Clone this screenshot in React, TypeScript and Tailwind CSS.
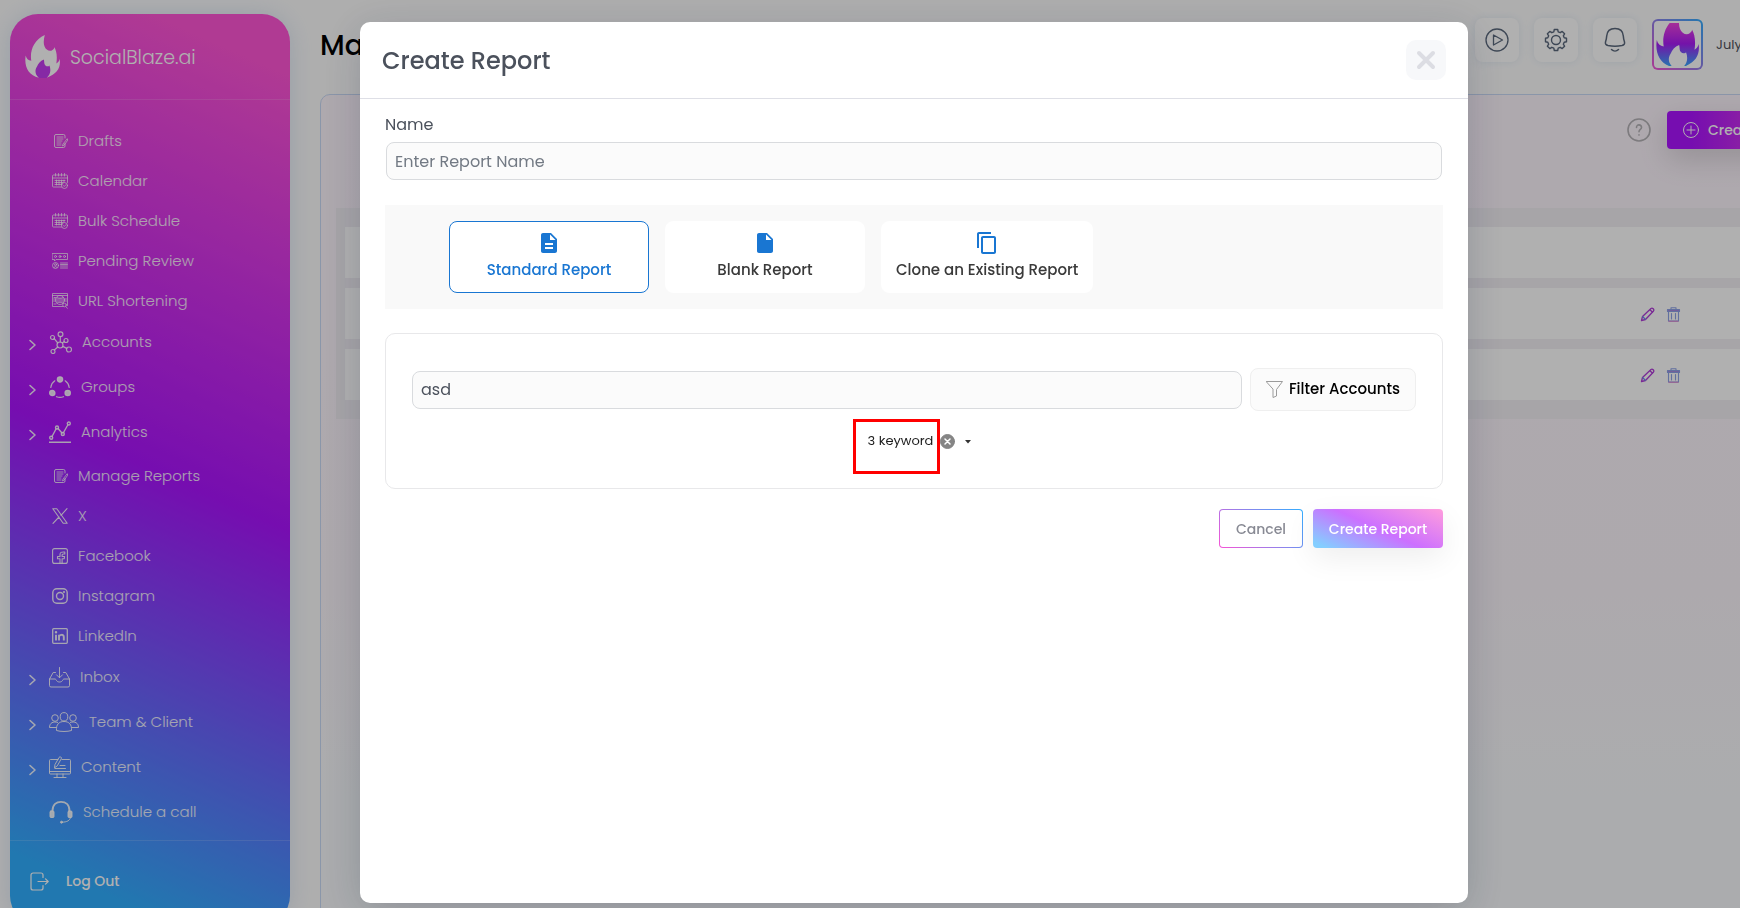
import type { ReactNode } from 'react'
import { MdContentCopy, MdDescription, MdInsertDriveFile } from 'react-icons/md'

const FLAME =
  'M60 0C57 12 55 24 59 34C63 46 76 51 83 45C88 42 90 38 88 35C96 48 98 66 95 86C101 83 104 78 105 72C109 98 98 118 66 129C78 120 79 104 74 92C72 95 66 96 62 92C57 88 59 80 57 74C46 78 40 86 36 96C29 106 30 120 42 129C10 122 -3 96 2 62C4 71 10 77 19 78C14 48 26 16 60 0Z'
const FLAME_CORE = 'M66 129C78 120 79 104 74 92C72 95 66 96 62 92C57 88 59 80 57 74C46 78 40 86 36 96C29 106 30 120 42 129C50 131 58 131 66 129Z'

const Svg = ({ size = 16, width = 1, box = 24, children }: { size?: number; width?: number; box?: number; children: ReactNode }) => (
  <svg
    width={size}
    height={size}
    viewBox={`0 0 ${box} ${box}`}
    fill="none"
    stroke="currentColor"
    strokeWidth={width}
    strokeLinecap="round"
    strokeLinejoin="round"
    aria-hidden="true"
    className="shrink-0"
  >
    {children}
  </svg>
)

const DraftIcon = () => (
  <Svg box={16} width={0.9}>
    <path d="M13 10.500V13a1.500 1.500 0 0 1-1.500 1.500H4A1.500 1.500 0 0 1 2.500 13V3A1.500 1.500 0 0 1 4 1.500h7.500A1.500 1.500 0 0 1 13 3v2" />
    <path d="M5 4h6M5 6h6M5 8h5M5 10h4M5 12h4" strokeWidth="0.8" />
    <path d="M15 6 11 11l-.5 2 1.700-1L15.500 7.500z" strokeWidth="0.8" />
  </Svg>
)

const CalendarIcon = () => (
  <Svg box={16} width={0.8}>
    <path d="M9.500 14H1.500a1 1 0 0 1-1-1V3a1 1 0 0 1 1-1h13a1 1 0 0 1 1 1v6.500M.5 5h15" />
    <path d="M3.500.5v2.500M6.500.5v2.500M9.500.5v2.500M12.500.5v2.500" />
    <path d="M3 7.500h10M3 9.500h8M3 11.500h7M4.500 7v5M7 7v5M9.500 7v5M12 7v2" />
    <circle cx="12.500" cy="12.500" r="3" />
    <path d="m11.300 12.500 1 1 1.600-1.800" />
  </Svg>
)

const ReviewIcon = () => (
  <Svg box={16} width={0.8}>
    <path d="M.5.500h15v6H4L2.500 8V6.500h-2z" />
    <circle cx="3.500" cy="3.500" r="1" />
    <circle cx="8" cy="3.500" r="1" />
    <circle cx="12.500" cy="3.500" r="1" />
    <circle cx="3.500" cy="12.500" r="3" />
    <circle cx="3.500" cy="11.700" r="1" />
    <path d="M2 14.500c.5-1.300 2.500-1.300 3 0M8.500 10h7M8.500 11.500h7M8.500 13h7M8.500 15h7" />
  </Svg>
)

const UrlIcon = () => (
  <Svg box={16} width={0.8}>
    <path d="M11 13.500H.5V.5h15v12M.5 2.500h15" />
    <circle cx="8" cy="7" r="4.500" />
    <path d="M1.500 6h13M1.500 8h13M5 4.500c2 1 4 1 6 0M5 10c2-1 4-1 6 0M2 11h2M2 4.500h1.500" />
    <circle cx="12.500" cy="12" r="1.800" />
    <path d="m13.800 13.500 1.500 1.800" />
  </Svg>
)

const XIcon = () => (
  <Svg box={16} width={1.1}>
    <path d="M.8.700h4L15.200 15.300h-4zM15 .7 9 7.300M7 9 1 15.300" />
  </Svg>
)

const FacebookIcon = () => (
  <Svg box={16} width={1.1}>
    <rect x=".6" y=".6" width="14.800" height="14.800" rx="2" />
    <path d="M8 15.300v-4.500H5.500V8.500H8V6.500C8 4.500 9.300 3.700 12.800 4v2h-1.500c-1 0-1.200.3-1.200 1v1.500h2.500l-.4 2.300h-2.100v4.500" />
  </Svg>
)

const InstagramIcon = () => (
  <Svg box={16} width={1.400}>
    <rect x=".8" y=".8" width="14.400" height="14.400" rx="4" />
    <circle cx="8" cy="8" r="3.500" />
    <circle cx="12" cy="4" r=".4" fill="currentColor" />
  </Svg>
)

const LinkedinIcon = () => (
  <Svg box={16} width={1.300}>
    <rect x=".7" y=".7" width="14.600" height="14.600" rx="1" />
    <path d="M4 6.700v5.800M7 6.700v5.800M7 9c.3-2.800 4.800-3 4.800 0v3.500" strokeWidth="1.900" strokeLinecap="butt" />
    <circle cx="4" cy="4.200" r=".6" fill="currentColor" />
  </Svg>
)

const AccountsIcon = () => (
  <Svg size={23} box={23} width={1.200}>
    <circle cx="11" cy="14" r="3" />
    <circle cx="11.500" cy="3.200" r="2.400" />
    <circle cx="3.500" cy="6.500" r="2" />
    <circle cx="17" cy="9.500" r="2" />
    <circle cx="20" cy="18.500" r="2.500" />
    <circle cx="4" cy="20.500" r="2" />
    <path d="M11.300 5.600V11M5.200 7.700l3.600 4.300M15.300 10.600l-2 1.400M13.800 15.400l3.900 2M8.800 16l-3.500 3" />
  </Svg>
)

const GroupsIcon = () => (
  <Svg size={22} box={22} width={1.200}>
    <circle cx="11" cy="3.500" r="2.700" fill="currentColor" />
    <circle cx="3.300" cy="17" r="2.700" fill="currentColor" />
    <circle cx="18.700" cy="17" r="2.700" fill="currentColor" />
    <path d="M5.800 4.800A9.500 9.500 0 0 0 1.800 11.500M16.200 4.800a9.500 9.500 0 0 1 4 6.700M7.500 20.700c2.300.9 4.700.9 7 0" />
  </Svg>
)

const AnalyticsIcon = () => (
  <Svg size={22} box={22} width={1.400}>
    <path d="M0 21.300h22M3 15.500l4-7.500M9 7.500l4 4.500M14.500 11.500l4-7" />
    <circle cx="2.200" cy="16.800" r="1.500" />
    <circle cx="8" cy="6.500" r="1.500" />
    <circle cx="13.800" cy="13" r="1.500" />
    <circle cx="19.800" cy="2.500" r="1.500" />
  </Svg>
)

const InboxIcon = () => (
  <Svg size={21} box={21} width={1}>
    <path d="M10.500.500v10M7.500 7.800l3 3 3-3M6.500 5.500H4.200L.5 12v6.500a1.500 1.500 0 0 0 1.500 1.500h17a1.500 1.500 0 0 0 1.500-1.500V12l-3.700-6.500h-2.300M.5 12h5.500c1.500 0 1 3 4.500 3s3-3 4.500-3h5.500" />
  </Svg>
)

const TeamIcon = () => (
  <svg width="30" height="20" viewBox="0 0 30 20" fill="none" stroke="currentColor" strokeWidth="1" aria-hidden="true" className="shrink-0">
    <ellipse cx="15" cy="4.800" rx="3.800" ry="4.200" />
    <circle cx="6" cy="6" r="3.300" />
    <circle cx="24" cy="6" r="3.300" />
    <path d="M7.500 18.500C7 12.500 10 9.500 15 9.500s8 3 7.500 9c-4 1.300-11 1.300-15 0zM9 10.500C4 9 .5 11 .5 15.500h7M21 10.500c5-1.500 8.500.5 8.500 5h-7" />
  </svg>
)

const ContentIcon = () => (
  <Svg size={22} box={22} width={1}>
    <path d="M9 3.500H1.500a1 1 0 0 0-1 1V17a1 1 0 0 0 1 1h19a1 1 0 0 0 1-1V4.500a1 1 0 0 0-1-1H13M.5 15.500h21M8 18v3M14 18v3M5 21.500h12" />
    <path d="m5.500 11.500.5-3L10 1.500c1-1.500 3-.2 2.300 1.200L8.500 9.500zM6 12.500h10.500M11 9.500h5" />
  </Svg>
)

const HeadsetIcon = () => (
  <Svg size={24} box={24} width={1.800}>
    <path d="M3.500 11C3.500 4.500 7.500 1.800 12 1.800s8.500 2.700 8.500 9.200" />
    <rect x="1" y="11" width="4" height="6.500" rx="1" fill="currentColor" strokeWidth="1" />
    <rect x="19" y="11" width="4" height="6.500" rx="1" fill="currentColor" strokeWidth="1" />
    <path d="M21.500 17.500c-.5 3-3.500 4.700-8.500 4.700" strokeWidth="1" />
    <circle cx="12.500" cy="22.200" r="1" fill="currentColor" strokeWidth="1" />
  </Svg>
)

type Item = { label: string; icon: ReactNode; sub?: boolean; arrow?: boolean }

const menu: Item[] = [
  { label: 'Drafts', icon: <DraftIcon />, sub: true },
  { label: 'Calendar', icon: <CalendarIcon />, sub: true },
  { label: 'Bulk Schedule', icon: <CalendarIcon />, sub: true },
  { label: 'Pending Review', icon: <ReviewIcon />, sub: true },
  { label: 'URL Shortening', icon: <UrlIcon />, sub: true },
  { label: 'Accounts', icon: <AccountsIcon />, arrow: true },
  { label: 'Groups', icon: <GroupsIcon />, arrow: true },
  { label: 'Analytics', icon: <AnalyticsIcon />, arrow: true },
  { label: 'Manage Reports', icon: <DraftIcon />, sub: true },
  { label: 'X', icon: <XIcon />, sub: true },
  { label: 'Facebook', icon: <FacebookIcon />, sub: true },
  { label: 'Instagram', icon: <InstagramIcon />, sub: true },
  { label: 'LinkedIn', icon: <LinkedinIcon />, sub: true },
  { label: 'Inbox', icon: <InboxIcon />, arrow: true },
  { label: 'Team & Client', icon: <TeamIcon />, arrow: true },
  { label: 'Content', icon: <ContentIcon />, arrow: true },
  { label: 'Schedule a call', icon: <HeadsetIcon /> },
]

const Sidebar = () => (
  <aside className="ml-[10px] mt-[14px] flex h-[910px] w-[280px] shrink-0 flex-col rounded-[28px] bg-[linear-gradient(204deg,#ff54d6_6%,#ab14ff_50%,#31aeff_93%)] text-white shadow-[0_0_24px_rgba(120,160,220,0.25)]">
    <div className="flex h-[86px] items-center gap-[10px] border-b border-white/15 pl-[15px]">
      <svg width="35" height="43" viewBox="0 0 106 130" aria-hidden="true">
        <path d={FLAME_CORE} fill="#c23cf0" />
        <path d={FLAME} fill="#fff" />
      </svg>
      <span className="pt-[3px] text-[19px] font-light">SocialBlaze.ai</span>
    </div>
    <nav className="flex-1 pt-[21px]">
      <ul>
        {menu.map((item) => (
          <li key={item.label}>
            {item.sub ? (
              <a href="#" className="flex h-10 items-center gap-[10px] pl-[42px] text-[15px] font-light text-white/90">
                {item.icon}
                {item.label}
              </a>
            ) : (
              <a href="#" className="flex h-[45px] items-center gap-[10px] pb-[3px] pl-[17px] text-[15px] font-light text-white/90">
                <span className="w-3 pt-[6px]">
                  {item.arrow && (
                    <Svg size={12} box={12} width={1.600}>
                      <path d="m3 1.500 5 4.500-5 4.500" />
                    </Svg>
                  )}
                </span>
                {item.icon}
                {item.label}
              </a>
            )}
          </li>
        ))}
      </ul>
    </nav>
    <a href="#" className="flex h-[84px] items-center gap-[17px] border-t border-white/15 pb-[3px] pl-5 text-sm font-medium">
      <Svg size={19} box={19} width={1.200}>
        <path d="M13 5.500V3a2 2 0 0 0-2-2H3a2 2 0 0 0-2 2v13a2 2 0 0 0 2 2h8a2 2 0 0 0 2-2v-2.500M8 9.500h10M15.500 6.800l2.700 2.700-2.700 2.700" />
      </Svg>
      Log Out
    </a>
  </aside>
)

const HeaderButton = ({ label, children }: { label: string; children: ReactNode }) => (
  <button aria-label={label} className="flex size-11 items-center justify-center rounded-lg bg-white text-[#5a687c] shadow-[0_0_10px_rgba(130,170,210,0.2)]">
    {children}
  </button>
)

const Header = () => (
  <header className="flex h-[94px] items-start pt-[18px]">
    <h1 className="flex-1 pt-2 text-[28px] leading-10 font-medium text-black">Manage Reports</h1>
    <div className="flex gap-[15px]">
      <HeaderButton label="Tutorial">
        <Svg size={24} width={1.300}>
          <circle cx="12" cy="12" r="11" />
          <path d="M8.500 7v10l9-5z" />
        </Svg>
      </HeaderButton>
      <HeaderButton label="Settings">
        <Svg size={24} width={1.400}>
          <circle cx="12" cy="12" r="4.500" />
          <path d="M9.800 3.800 10.300 1.500h3.400l.5 2.300 2 .9 2-1.300 2.400 2.400-1.300 2 .9 2 2.300.5v3.400l-2.300.5-.9 2 1.300 2-2.400 2.400-2-1.300-2 .9-.5 2.300h-3.400l-.5-2.300-2-.9-2 1.300-2.400-2.400 1.300-2-.9-2-2.300-.5v-3.400l2.300-.5.9-2-1.300-2 2.400-2.400 2 1.300z" />
        </Svg>
      </HeaderButton>
      <HeaderButton label="Notifications">
        <Svg size={26} box={26} width={1.500}>
          <path d="M13 1.500c5 0 8 3 8.300 7.500.2 3 .5 4 1.200 6 .5 1.800-.5 3-2.500 3.500-4 .8-10 .8-14 0-2-.5-3-1.700-2.500-3.500.7-2 1-3 1.200-6C5 4.500 8 1.500 13 1.500zM9.500 22.500c2 2 5 2 7 0" />
        </Svg>
      </HeaderButton>
      <div className="mt-px size-[51px] rounded-md bg-[linear-gradient(45deg,#f654d6,#31aeff)] p-[2px]">
        <div className="flex size-full items-center justify-center rounded bg-white">
          <svg width="43" height="43" viewBox="0 20 106 106" role="img" aria-label="Profile">
            <defs>
              <linearGradient id="flame" x1="0" y1="0" x2="0" y2="1">
                <stop offset="0.150" stopColor="#f044dd" />
                <stop offset="0.550" stopColor="#a91cf5" />
                <stop offset="1" stopColor="#31aeff" />
              </linearGradient>
            </defs>
            <path d={FLAME} fill="url(#flame)" />
          </svg>
        </div>
      </div>
    </div>
    <span className="w-[140px] pt-[17px] pl-[13px] text-[13px] leading-5 text-[#50525c]">July</span>
  </header>
)

const reports = ['first', 'second']

const ReportsPanel = () => (
  <section className="flex-1 rounded-tl-[10px] border border-[#c9d9f5] bg-[linear-gradient(180deg,#fdf5fd_0%,#fbf5fb_60%,#f8fafc_85%)] px-[15px] pt-4">
    <div className="flex h-[38px] items-center justify-end gap-4">
      <button aria-label="Help" className="text-[#b5b3b7]">
        <Svg size={24} width={1.600}>
          <circle cx="12" cy="12" r="11" />
          <path d="M9.500 9.500c0-3.600 5-3.400 5 0 0 2-2.500 2-2.500 4.300M12 16.900v.2" />
        </Svg>
      </button>
      <button className="flex h-full w-40 items-center gap-[9px] rounded bg-[linear-gradient(90deg,#ab14ff_15%,#f654d6_100%)] pl-4 text-sm font-medium whitespace-nowrap text-white shadow-[0_10px_30px_rgba(0,0,0,0.15)]">
        <Svg size={16} box={16} width={1}>
          <circle cx="8" cy="8" r="7.500" />
          <path d="M8 4v8M4 8h8" />
        </Svg>
        Create Report
      </button>
    </div>
    <div className="mt-[59px] -mr-[15px] bg-[#f2eff4] py-[19px] pl-[9px]">
      <div className="h-[51px] bg-white" />
      <ul>
        {reports.map((report) => (
          <li key={report} className="mt-[10px] flex h-[51px] items-center justify-end gap-[11px] bg-white pt-[2px] pr-[161px]">
            <button aria-label={`Edit ${report} report`} className="text-[#b03cd8]">
              <Svg size={15} box={15} width={1.300}>
                <path d="m1.500 13.500 1-4L11 1.500c1.500-1 3.500 1 2.500 2.500L5.500 12.500zM10 2.800l2.500 2.500" />
                <path d="m2.800 9.800 2.500 2.400" stroke="#6b8ee8" />
              </Svg>
            </button>
            <button aria-label={`Delete ${report} report`} className="text-[#8fa2e6]">
              <Svg size={15} box={15} width={1.100}>
                <path d="M1.500 2.500h12v2h-12z" fill="#a58ae0" />
                <path d="M5 2.200V.700h5v1.500M2.500 4.500V14h10V4.500M5.500 6.500v5.500M9.500 6.500v5.500" />
                <path d="M3 14.200h9" stroke="#dd83cf" />
              </Svg>
            </button>
          </li>
        ))}
      </ul>
    </div>
  </section>
)

const inputClass = 'h-[38px] w-full rounded-lg border border-[#d9dbde] bg-[#fbfbfb] px-2 text-base text-[#4b515c] placeholder:text-[#737a84]'

const CreateReportModal = () => (
  <div className="fixed inset-0 -right-[88px] flex justify-center bg-black/31 px-4 pt-[22px] pb-[5px]">
    <div role="dialog" aria-labelledby="modal-title" className="w-full max-w-[1108px] rounded-[10px] bg-white shadow-[0_8px_40px_rgba(20,30,60,0.2)]">
      <div className="flex h-[77px] items-center justify-between border-b border-[#dedfe6] px-[22px]">
        <h2 id="modal-title" className="pt-[2px] text-2xl font-medium text-[#4b515c]">
          Create Report
        </h2>
        <button aria-label="Close" className="flex size-10 items-center justify-center rounded-[10px] bg-[#f7f8fa] text-[#dcdde3]">
          <Svg size={20} box={20} width={4}>
            <path d="m3 3 14 14M17 3 3 17" />
          </Svg>
        </button>
      </div>
      <div className="px-[25px]">
        <label htmlFor="report-name" className="block pt-[14px] pb-[5px] text-base leading-6 text-[#4b515c]">
          Name
        </label>
        <div className="px-px">
          <input id="report-name" type="text" placeholder="Enter Report Name" className={inputClass} />
        </div>

        <div className="mt-[25px] flex gap-4 bg-[#f9f9f9] py-4 pl-16">
          <button className="flex h-[72px] min-w-[200px] flex-col items-center rounded-lg border border-[#1976d2] bg-white px-[14px] pt-[9px] text-[15px] font-medium text-[#1976d2]">
            <MdDescription size={24} />
            <span className="mt-1 leading-[22px]">Standard Report</span>
          </button>
          <button className="flex h-[72px] min-w-[200px] flex-col items-center rounded-lg border border-white bg-white px-[14px] pt-[9px] text-[15px] font-medium text-[#3a3a3a]">
            <MdInsertDriveFile size={24} className="text-[#1976d2]" />
            <span className="mt-1 leading-[22px]">Blank Report</span>
          </button>
          <button className="flex h-[72px] min-w-[200px] flex-col items-center rounded-lg border border-white bg-white px-[14px] pt-[9px] text-[15px] font-medium text-[#3a3a3a]">
            <MdContentCopy size={24} className="text-[#1976d2]" />
            <span className="mt-1 leading-[22px]">Clone an Existing Report</span>
          </button>
        </div>

        <div className="mt-6 rounded-[10px] border border-[#e8e8ea] px-[26px] py-[34px]">
          <div className="flex items-center gap-2">
            <input type="text" aria-label="Search accounts" defaultValue="asd" className={inputClass} />
            <button className="flex h-[43px] w-[166px] shrink-0 items-center justify-center gap-[6px] rounded-lg border border-[#efefef] bg-[#fbfbfb] text-[15px] font-medium text-black">
              <Svg size={17} box={17} width={1}>
                <path d="M.5.500h16L10.500 8.500v6.500l-3.500 1.500v-8z" stroke="#9b9b9b" />
              </Svg>
              Filter Accounts
            </button>
          </div>
          <div className="mt-2 flex justify-center">
            <div className="relative flex h-[35px] items-start pt-3 pr-1 pl-[15px] text-[13px] leading-5 text-[#1c1c1c]">
              3 keyword
              <button aria-label="Clear keywords" className="ml-[7px] pt-[3px] text-[#858585]">
                <Svg size={15} box={15} width={1.500}>
                  <circle cx="7.500" cy="7.500" r="7" fill="currentColor" strokeWidth="1" />
                  <path d="m5 5 5 5M10 5l-5 5" stroke="#fff" />
                </Svg>
              </button>
              <button aria-label="Show keywords" className="ml-[10px] pt-[9px]">
                <svg width="6" height="4" viewBox="0 0 6 4" aria-hidden="true">
                  <path d="M0 0h6L3 3.500z" fill="#333" />
                </svg>
              </button>
              <span className="absolute top-0 left-0 h-[55px] w-[87px] border-3 border-[#ff0000]" />
            </div>
          </div>
        </div>

        <div className="mt-5 flex justify-end gap-[10px] text-sm font-medium">
          <button className="h-[39px] rounded bg-[linear-gradient(45deg,#f654d6,#31aeff)] p-px text-[#888a94]">
            <span className="flex h-full w-[82px] items-center justify-center rounded-[3px] bg-white">Cancel</span>
          </button>
          <button className="h-[39px] w-[130px] rounded bg-[linear-gradient(204deg,#ff9ddd_0%,#cc70ff_50%,#84ceff_94%)] text-white shadow-[0_10px_30px_rgba(0,0,0,0.07)]">
            Create Report
          </button>
        </div>
      </div>
    </div>
  </div>
)

export default function App() {
  return (
    <div className="h-screen overflow-hidden bg-[#fdfdfd] font-['Poppins','Inter',sans-serif]">
      <div className="-mr-[103px] flex min-h-full">
        <Sidebar />
        <main className="ml-[30px] flex min-w-0 flex-1 flex-col">
          <Header />
          <ReportsPanel />
        </main>
      </div>
      <CreateReportModal />
    </div>
  )
}
